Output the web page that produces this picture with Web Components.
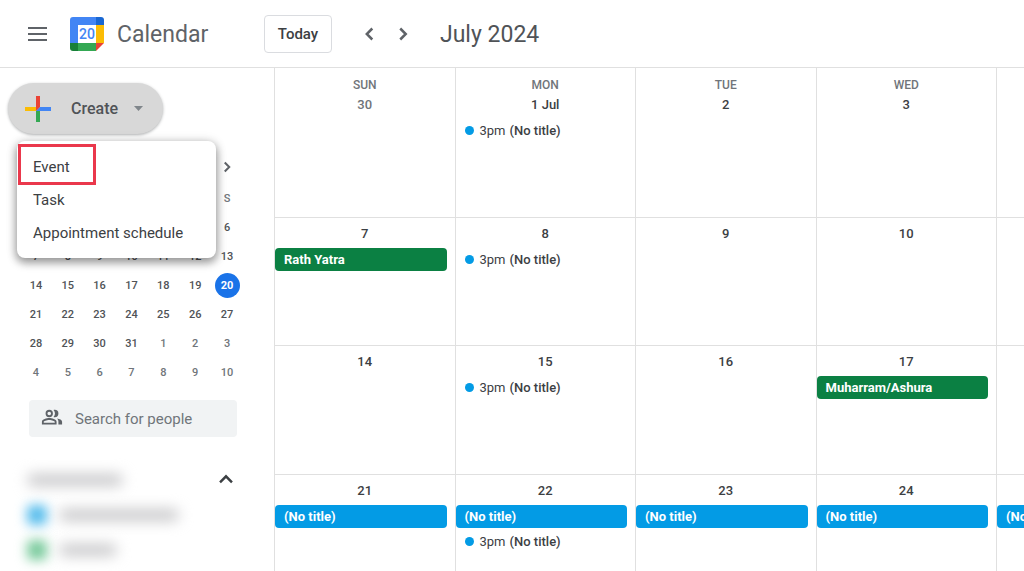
<!DOCTYPE html>
<html lang="en">
<head>
<meta charset="utf-8">
<meta name="viewport" content="width=device-width, initial-scale=1">
<title>Calendar - July 2024</title>
<style>
    html, body {
        margin: 0;
        height: 100%;
        overflow: hidden;
    }
    body {
        background: #fff;
        color: #3c4043;
        font-family: Roboto, "Liberation Sans", sans-serif;
    }
</style>
</head>
<body>
<calendar-app></calendar-app>

<script>
const BASE_STYLE = `
    *, *::before, *::after { box-sizing: border-box; }
    button, input {
        margin: 0;
        padding: 0;
        border: none;
        background: none;
        color: inherit;
        font: inherit;
    }
    button { cursor: pointer; }
    svg { display: block; }
`;

const CHEVRONS = {
    left: 'M14.5 6 L8.5 12 L14.5 18',
    right: 'M9 6 L15 12 L9 18',
    up: 'M5.5 14.5 L12 8 L18.5 14.5'
};

// Icon button with a chevron, direction = left | right | up
class ChevronButton extends HTMLElement {
    constructor() {
        super();
        this.attachShadow({ mode: 'open' });
    }

    connectedCallback() {
        const direction = this.getAttribute('direction') || 'right';
        const size = this.getAttribute('size') || 24;
        this.shadowRoot.innerHTML = `
            <style>
                ${BASE_STYLE}
                :host { display: block; color: #5f6368; }
                button {
                    display: grid;
                    place-items: center;
                    width: 33px;
                    height: 33px;
                    border-radius: 50%;
                }
                path { fill: none; stroke: currentColor; stroke-width: 2.7; }
            </style>
            <button aria-label="${this.getAttribute('label')}">
                <svg width="${size}" height="${size}" viewBox="0 0 24 24"><path d="${CHEVRONS[direction]}"/></svg>
            </button>
        `;
    }
}

class CalendarLogo extends HTMLElement {
    constructor() {
        super();
        this.attachShadow({ mode: 'open' });
        this.shadowRoot.innerHTML = `
            <style>
                ${BASE_STYLE}
                :host { display: block; }
                text { font: 500 14px Roboto, sans-serif; fill: #4285f4; }
            </style>
            <svg width="34" height="34" viewBox="0 0 34 34">
                <path d="M3 0H26V8H8V26H0V3Q0 0 3 0Z" fill="#4285f4"/>
                <path d="M26 0H31Q34 0 34 3V8H26Z" fill="#1967d2"/>
                <path d="M26 8H34V26H26Z" fill="#fbbc04"/>
                <path d="M8 26H26V34H8Z" fill="#34a853"/>
                <path d="M0 26H8V34H3Q0 34 0 31Z" fill="#188038"/>
                <path d="M26 26H34L26 34Z" fill="#ea4335"/>
                <path d="M8 8H26V26H8Z" fill="#fff"/>
                <text x="17" y="22" text-anchor="middle">20</text>
            </svg>
        `;
    }
}

class AppHeader extends HTMLElement {
    constructor() {
        super();
        this.attachShadow({ mode: 'open' });
        this.shadowRoot.innerHTML = `
            <style>
                ${BASE_STYLE}
                :host {
                    display: block;
                    border-bottom: 1px solid #e0e0e0;
                }
                header {
                    display: flex;
                    align-items: center;
                    height: 67px;
                }
                .brand {
                    display: flex;
                    align-items: center;
                    flex: 0 0 264px;
                    padding-left: 28px;
                }
                .hamburger { margin-right: 23px; }
                .name, h1 {
                    margin: 0;
                    padding-top: 2px;
                    font-size: 23px;
                    line-height: 32px;
                    font-weight: 400;
                }
                .name { margin-left: 13px; color: #5f6368; }
                h1 { color: #505357; }
                .today {
                    width: 68px;
                    height: 38px;
                    border: 1px solid #dadce0;
                    border-radius: 4px;
                    font-size: 15px;
                    font-weight: 500;
                }
                nav { display: flex; margin: 0 21px; }
            </style>
            <header>
                <div class="brand">
                    <button class="hamburger" aria-label="Main menu">
                        <svg width="19" height="14" viewBox="0 0 19 14"><path d="M0 1H19M0 7H19M0 13H19" stroke="#5f6368" stroke-width="2"/></svg>
                    </button>
                    <calendar-logo></calendar-logo>
                    <span class="name">Calendar</span>
                </div>
                <button class="today">Today</button>
                <nav>
                    <chevron-button direction="left" label="Previous month" size="22"></chevron-button>
                    <chevron-button direction="right" label="Next month" size="22"></chevron-button>
                </nav>
                <h1>July 2024</h1>
            </header>
        `;
    }
}

// Create button with its drop-down menu. Menu entries are slotted in.
class CreateMenu extends HTMLElement {
    constructor() {
        super();
        this.attachShadow({ mode: 'open' });
        this.shadowRoot.innerHTML = `
            <style>
                ${BASE_STYLE}
                :host { display: block; position: relative; }
                .create {
                    display: flex;
                    align-items: center;
                    width: 155px;
                    height: 51px;
                    padding-left: 17px;
                    border-radius: 26px;
                    background: #d8d8d8;
                    box-shadow: 0 1px 3px rgba(60, 64, 67, 0.4);
                    color: #505357;
                    font-size: 16px;
                    font-weight: 500;
                }
                .create span { margin: 0 16px 0 20px; }
                .menu {
                    position: absolute;
                    z-index: 1;
                    top: 58px;
                    left: 9px;
                    width: 199px;
                    padding: 9px 0;
                    border-radius: 8px;
                    background: #fff;
                    box-shadow: 0 4px 8px 1px rgba(0, 0, 0, 0.35), 0 1px 12px rgba(0, 0, 0, 0.15);
                }
                .menu[hidden] { display: none; }
            </style>
            <button class="create" aria-haspopup="menu" aria-expanded="true">
                <svg width="26" height="26" viewBox="0 0 26 26">
                    <path d="M11 0H15V11L11 15Z" fill="#ea4335"/>
                    <path d="M0 11H15L11 15H0Z" fill="#fbbc04"/>
                    <path d="M11 0H15V11L11 15Z" fill="#ea4335"/>
                    <path d="M15 11H26V15H11Z" fill="#4285f4"/>
                    <path d="M11 15H15V26H11Z" fill="#34a853"/>
                </svg>
                <span>Create</span>
                <svg width="9" height="5" viewBox="0 0 9 5"><path d="M0 0H9L4.5 5Z" fill="#80868b"/></svg>
            </button>
            <div class="menu" role="menu"><slot></slot></div>
        `;
        const button = this.shadowRoot.querySelector('.create');
        const menu = this.shadowRoot.querySelector('.menu');
        button.addEventListener('click', () => {
            menu.hidden = !menu.hidden;
            button.setAttribute('aria-expanded', String(!menu.hidden));
        });
    }
}

class CreateMenuItem extends HTMLElement {
    constructor() {
        super();
        this.attachShadow({ mode: 'open' });
        this.shadowRoot.innerHTML = `
            <style>
                ${BASE_STYLE}
                :host { display: block; position: relative; }
                button {
                    display: block;
                    width: 100%;
                    padding: 1px 16px 0;
                    font-size: 15px;
                    line-height: 32px;
                    text-align: left;
                }
                /* red frame round the highlighted entry */
                :host([highlight])::after {
                    content: "";
                    position: absolute;
                    box-sizing: border-box;
                    top: -6px;
                    left: 1px;
                    width: 78px;
                    height: 41px;
                    border: 3px solid #ea384c;
                    pointer-events: none;
                }
            </style>
            <button role="menuitem"><slot></slot></button>
        `;
    }
}

class MiniCalendar extends HTMLElement {
    constructor() {
        super();
        this.attachShadow({ mode: 'open' });
        const start = new Date(2024, 5, 30);
        let rows = '';
        for (let week = 0; week < 6; week++) {
            rows += '<tr>';
            for (let day = 0; day < 7; day++) {
                const date = new Date(start.getFullYear(), start.getMonth(), start.getDate() + week * 7 + day);
                const other = date.getMonth() !== 6;
                const today = !other && date.getDate() === 20;
                rows += `<td class="${other ? 'other' : ''}${today ? 'today' : ''}"><span>${date.getDate()}</span></td>`;
            }
            rows += '</tr>';
        }
        this.shadowRoot.innerHTML = `
            <style>
                ${BASE_STYLE}
                :host { display: block; }
                .head {
                    display: flex;
                    align-items: center;
                    justify-content: flex-end;
                    height: 34px;
                }
                table {
                    width: 100%;
                    table-layout: fixed;
                    border-collapse: collapse;
                    color: #505357;
                    font-size: 11px;
                    line-height: 25px;
                    text-align: center;
                }
                th, td { height: 29px; padding: 0; font-weight: 500; }
                th, .other { color: #70757a; }
                td span { display: block; width: 25px; margin: 0 auto; }
                .today span {
                    border-radius: 50%;
                    background: #1a73e8;
                    color: #fff;
                    font-weight: 700;
                }
            </style>
            <div class="head"><chevron-button direction="right" label="Next month" size="18"></chevron-button></div>
            <table aria-label="July 2024">
                <thead><tr>${[...'SMTWTFS'].map(d => `<th>${d}</th>`).join('')}</tr></thead>
                <tbody>${rows}</tbody>
            </table>
        `;
    }
}

class PeopleSearch extends HTMLElement {
    constructor() {
        super();
        this.attachShadow({ mode: 'open' });
        this.shadowRoot.innerHTML = `
            <style>
                ${BASE_STYLE}
                :host { display: block; }
                label {
                    display: flex;
                    align-items: center;
                    gap: 12px;
                    height: 37px;
                    padding: 0 12px;
                    border-radius: 4px;
                    background: #f1f3f4;
                }
                svg { flex: none; }
                input {
                    flex: 1;
                    min-width: 0;
                    outline: none;
                    font-size: 15px;
                    line-height: 20px;
                }
                input::placeholder { color: #70757a; opacity: 1; }
            </style>
            <label>
                <svg width="22" height="22" viewBox="0 2 24 24" fill="#5f6368">
                    <path d="M9 12a4 4 0 1 0 0-8 4 4 0 0 0 0 8zm0-6a2 2 0 1 1 0 4 2 2 0 0 1 0-4zM9 13c-2.7 0-8 1.3-8 4v3h16v-3c0-2.700-5.300-4-8-4zm6 5H3v-1c0-.7 3.100-2 6-2s6 1.300 6 2v1zM15 12a4 4 0 0 0 0-8c-.5 0-.9.1-1.300.2a6 6 0 0 1 0 7.600c.4.1.8.2 1.300.2zM17.500 13.500c1 .9 1.500 2 1.500 3.500v3h4v-3c0-2-2.700-3.100-5.500-3.500z"/>
                </svg>
                <input type="text" placeholder="Search for people" aria-label="Search for people">
            </label>
        `;
    }
}

// Calendar list, names are blurred out
class CalendarList extends HTMLElement {
    constructor() {
        super();
        this.attachShadow({ mode: 'open' });
        this.shadowRoot.innerHTML = `
            <style>
                ${BASE_STYLE}
                :host { display: block; }
                .row {
                    display: flex;
                    align-items: center;
                    gap: 12px;
                    height: 35px;
                }
                .head { justify-content: space-between; }
                .bar {
                    width: 96px;
                    height: 12px;
                    border-radius: 6px;
                    background: #c8c8ca;
                    filter: blur(7px);
                }
                .bar.long { width: 120px; }
                .bar.short { width: 58px; }
                .box {
                    width: 20px;
                    height: 20px;
                    border-radius: 4px;
                    background: var(--color);
                    filter: blur(6px);
                }
                chevron-button { color: #3c4043; }
            </style>
            <div class="row head">
                <span class="bar"></span>
                <chevron-button direction="up" label="Collapse" size="22"></chevron-button>
            </div>
            <div class="row"><span class="box" style="--color: #58bdec"></span><span class="bar long"></span></div>
            <div class="row"><span class="box" style="--color: #7acb9d"></span><span class="bar short"></span></div>
        `;
    }
}

class SideBar extends HTMLElement {
    constructor() {
        super();
        this.attachShadow({ mode: 'open' });
        this.shadowRoot.innerHTML = `
            <style>
                ${BASE_STYLE}
                :host { display: block; padding: 15px 30px 0 8px; }
                mini-calendar { margin: 16px 1px 0 12px; }
                people-search { margin: 13px 7px 0 21px; }
                calendar-list { margin: 25px 2px 0 19px; }
            </style>
            <create-menu>
                <create-menu-item highlight>Event</create-menu-item>
                <create-menu-item>Task</create-menu-item>
                <create-menu-item>Appointment schedule</create-menu-item>
            </create-menu>
            <mini-calendar></mini-calendar>
            <people-search></people-search>
            <calendar-list></calendar-list>
        `;
    }
}

// One event in a day cell: type = timed | green | blue
class CalendarEvent extends HTMLElement {
    constructor() {
        super();
        this.attachShadow({ mode: 'open' });
        this.shadowRoot.innerHTML = `
            <style>
                ${BASE_STYLE}
                :host { display: block; margin: 0 8px 2px 0; }
                button {
                    display: flex;
                    align-items: center;
                    width: 100%;
                    height: 23px;
                    padding: 0 9px;
                    border-radius: 4px;
                    font-size: 13px;
                    font-weight: 500;
                    white-space: nowrap;
                }
                :host([type="green"]) button { background: #0b8043; }
                :host([type="blue"]) button { background: #039be5; }
                :host(:not([type="timed"])) button { color: #fff; font-weight: 700; }
                :host([type="timed"]) button::before {
                    content: "";
                    width: 9px;
                    height: 9px;
                    margin-right: 6px;
                    border-radius: 50%;
                    background: #039be5;
                }
                ::slotted(time) { margin-right: 4px; font-weight: 400; }
            </style>
            <button><slot></slot></button>
        `;
    }
}

class DayCell extends HTMLElement {
    constructor() {
        super();
        this.attachShadow({ mode: 'open' });
    }

    connectedCallback() {
        const weekday = this.getAttribute('weekday');
        this.shadowRoot.innerHTML = `
            <style>
                ${BASE_STYLE}
                :host {
                    display: block;
                    box-sizing: border-box;
                    min-width: 0;
                    padding-top: 6px;
                    border-right: 1px solid #e0e0e0;
                    border-bottom: 1px solid #e0e0e0;
                }
                :host([weekday]) { padding-top: 7px; }
                .weekday, .date {
                    line-height: 20px;
                    font-weight: 500;
                    text-align: center;
                }
                .weekday { font-size: 12px; color: #70757a; }
                .date { margin-bottom: 4px; font-size: 13px; }
                :host([other]) .date { color: #70757a; }
            </style>
            ${weekday ? `<div class="weekday">${weekday}</div>` : ''}
            <div class="date">${this.getAttribute('date')}</div>
            <slot></slot>
        `;
    }
}

const TIMED = '<calendar-event type="timed"><time>3pm</time>(No title)</calendar-event>';
const BLUE = '<calendar-event type="blue">(No title)</calendar-event>';

const DAYS = [
    { weekday: 'SUN', date: '30', other: true },
    { weekday: 'MON', date: '1 Jul', events: TIMED },
    { weekday: 'TUE', date: '2' },
    { weekday: 'WED', date: '3' },
    { weekday: 'THU', date: '4' },
    { date: '7', events: '<calendar-event type="green">Rath Yatra</calendar-event>' },
    { date: '8', events: TIMED },
    { date: '9' },
    { date: '10' },
    { date: '11' },
    { date: '14' },
    { date: '15', events: TIMED },
    { date: '16' },
    { date: '17', events: '<calendar-event type="green">Muharram/Ashura</calendar-event>' },
    { date: '18' },
    { date: '21', events: BLUE },
    { date: '22', events: BLUE + TIMED },
    { date: '23', events: BLUE },
    { date: '24', events: BLUE },
    { date: '25', events: BLUE }
];

class MonthGrid extends HTMLElement {
    constructor() {
        super();
        this.attachShadow({ mode: 'open' });
        this.shadowRoot.innerHTML = `
            <style>
                ${BASE_STYLE}
                /* the last column runs past the right edge */
                :host {
                    display: grid;
                    grid-template-columns: repeat(5, 24.1%);
                    grid-template-rows: 299fr 257fr 257fr 193fr;
                    min-width: 0;
                    overflow: hidden;
                    border-left: 1px solid #e0e0e0;
                }
                day-cell:nth-last-of-type(-n + 5) { border-bottom: none; }
            </style>
            ${DAYS.map(day => `
                <day-cell date="${day.date}" ${day.weekday ? `weekday="${day.weekday}"` : ''} ${day.other ? 'other' : ''}>${day.events || ''}</day-cell>
            `).join('')}
        `;
    }
}

class CalendarApp extends HTMLElement {
    constructor() {
        super();
        this.attachShadow({ mode: 'open' });
        this.shadowRoot.innerHTML = `
            <style>
                ${BASE_STYLE}
                :host {
                    display: flex;
                    flex-direction: column;
                    height: 100vh;
                }
                main {
                    display: grid;
                    grid-template-columns: 274px minmax(0, 1fr);
                    flex: 1;
                    min-height: 0;
                }
            </style>
            <app-header></app-header>
            <main>
                <side-bar></side-bar>
                <month-grid></month-grid>
            </main>
        `;
    }
}

customElements.define('chevron-button', ChevronButton);
customElements.define('calendar-logo', CalendarLogo);
customElements.define('app-header', AppHeader);
customElements.define('create-menu', CreateMenu);
customElements.define('create-menu-item', CreateMenuItem);
customElements.define('mini-calendar', MiniCalendar);
customElements.define('people-search', PeopleSearch);
customElements.define('calendar-list', CalendarList);
customElements.define('side-bar', SideBar);
customElements.define('calendar-event', CalendarEvent);
customElements.define('day-cell', DayCell);
customElements.define('month-grid', MonthGrid);
customElements.define('calendar-app', CalendarApp);
</script>
</body>
</html>
